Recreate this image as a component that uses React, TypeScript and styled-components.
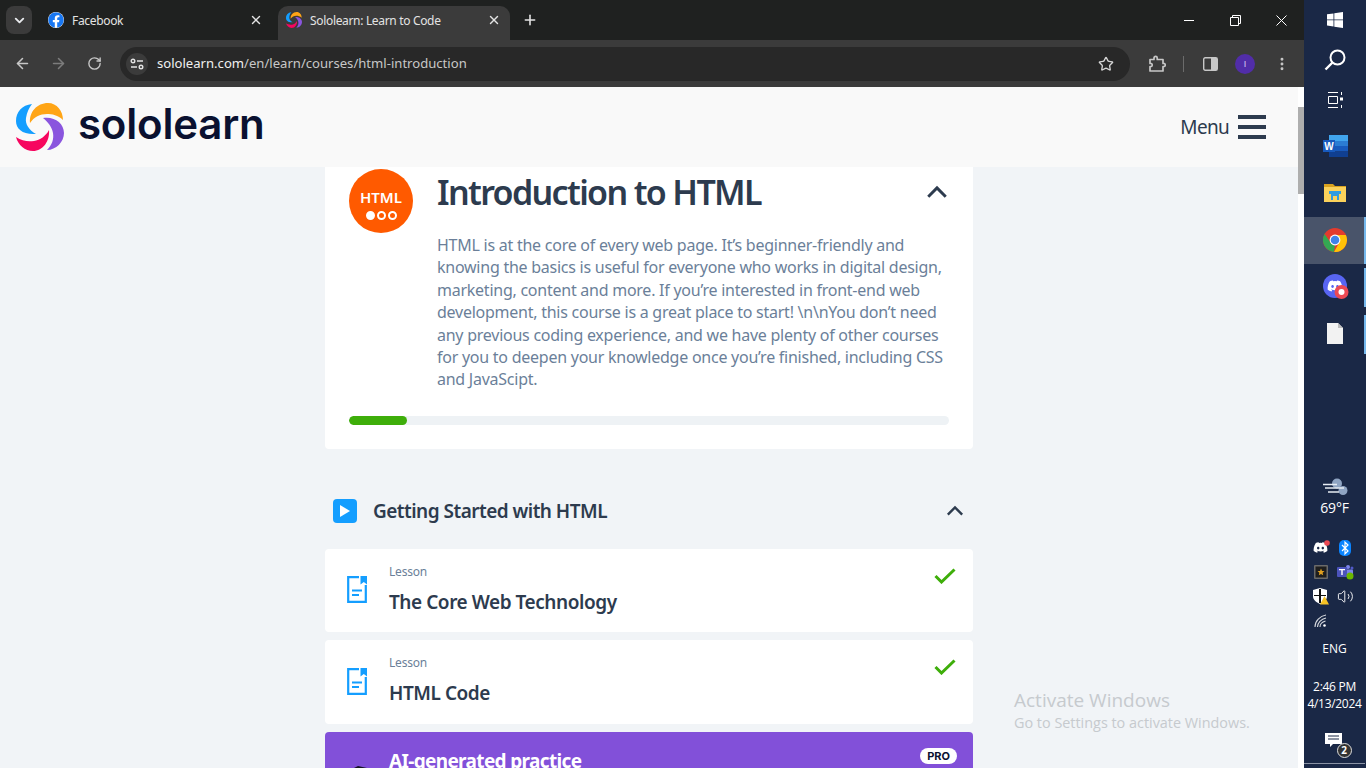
import styled, { createGlobalStyle } from "styled-components";
import { ArrowLeft, ArrowRight, ChevronDown, EllipsisVertical, Plus, RotateCw, Star, Volume2, X } from "lucide-react";
import { FaDiscord, FaFacebook } from "react-icons/fa";

const GlobalStyle = createGlobalStyle`
  html, body {
    margin: 0;
    height: 100%;
    overflow: hidden;
  }
  * {
    box-sizing: border-box;
  }
`;

const Screen = styled.div`
  display: flex;
  width: 1366px;
  height: 768px;
  overflow: hidden;
  position: relative;
  font-family: "Noto Sans", sans-serif;
`;

const Browser = styled.div`
  display: flex;
  flex-direction: column;
  width: 1304px;
  height: 768px;
`;

const TabStrip = styled.div`
  display: flex;
  align-items: flex-end;
  height: 40px;
  flex: none;
  background: #1f2120;
  padding-left: 6px;
`;

const TabSearch = styled.div`
  display: flex;
  align-items: center;
  justify-content: center;
  width: 26px;
  height: 28px;
  margin-bottom: 6px;
  border-radius: 8px;
  background: #3b3b3b;
  color: #e8eaed;
`;

const Tab = styled.div<{ $active?: boolean }>`
  display: flex;
  align-items: center;
  gap: 8px;
  width: ${(p) => (p.$active ? "232px" : "246px")};
  height: 34px;
  padding: 0 ${(p) => (p.$active ? "9px" : "15px")} 6px ${(p) => (p.$active ? "8px" : "16px")};
  border-radius: 10px 10px 0 0;
  background: ${(p) => (p.$active ? "#3b3b3b" : "transparent")};
  color: #e3e3e3;
  font-size: 12px;
  letter-spacing: -0.33px;
  span {
    flex: 1;
    white-space: nowrap;
  }
`;

const NewTab = styled.div`
  display: flex;
  align-items: center;
  padding: 0 0 12px 12px;
  color: #e3e3e3;
`;

const WindowControls = styled.div`
  display: flex;
  align-items: center;
  margin-left: auto;
  align-self: stretch;
  color: #fff;
`;

const WindowButton = styled.div`
  display: flex;
  align-items: center;
  justify-content: center;
  width: 46px;
  height: 40px;
`;

const Toolbar = styled.div`
  display: flex;
  align-items: center;
  height: 47px;
  flex: none;
  background: #3b3b3b;
  padding: 0 14px 0 13px;
  color: #c7c7c7;
`;

const NavButton = styled.div<{ $dim?: boolean }>`
  display: flex;
  align-items: center;
  justify-content: center;
  width: 18px;
  margin-right: 18px;
  color: ${(p) => (p.$dim ? "#7c7c7c" : "#c7c7c7")};
`;

const Omnibox = styled.div`
  display: flex;
  align-items: center;
  width: 1010px;
  height: 34px;
  margin-left: -1px;
  padding: 0 16px 0 6px;
  border-radius: 17px;
  background: #282828;
`;

const SiteChip = styled.div`
  display: flex;
  align-items: center;
  justify-content: center;
  width: 22px;
  height: 22px;
  margin-right: 9px;
  border-radius: 50%;
  background: #3b3b3b;
`;

const Url = styled.div`
  flex: 1;
  font-size: 13.1px;
  line-height: 16px;
  margin-top: -1px;
  color: #c7c7c7;
  white-space: nowrap;
  b {
    font-weight: 400;
    color: #f0f0f0;
  }
`;

const ToolDivider = styled.div`
  width: 1px;
  height: 16px;
  margin: 0 19px 0 17px;
  background: #6b6b6b;
`;

const Avatar = styled.div`
  display: flex;
  align-items: center;
  justify-content: center;
  width: 20px;
  height: 20px;
  margin-left: 17px;
  border-radius: 50%;
  background: #512da8;
  color: #d9cdf5;
  font-family: "Liberation Sans", sans-serif;
  font-size: 9px;
`;

const MoreButton = styled.div`
  display: flex;
  margin-left: 19px;
  color: #c7c7c7;
`;

const Viewport = styled.div`
  display: flex;
  flex: 1;
  min-height: 0;
`;

const Page = styled.div`
  flex: 1;
  min-width: 0;
  overflow: hidden;
  background: #f1f4f7;
`;

const Scrollbar = styled.div`
  width: 6px;
  flex: none;
  padding-top: 20px;
  background: #ffffff;
`;

const ScrollThumb = styled.div`
  height: 87px;
  background: #aeaeae;
`;

const SiteHeader = styled.header`
  display: flex;
  align-items: center;
  justify-content: space-between;
  height: 80px;
  padding: 0 32px 0 16px;
  background: #f9f9f9;
`;

const Brand = styled.div`
  display: flex;
  align-items: center;
  gap: 14px;
`;

const Wordmark = styled.div`
  margin-bottom: 7px;
  font-family: "Inter", sans-serif;
  font-size: 42px;
  font-weight: 600;
  letter-spacing: -0.2px;
  line-height: 48px;
  color: #0a1130;
`;

const MenuToggle = styled.div`
  display: flex;
  align-items: center;
  gap: 9px;
  font-size: 19px;
  letter-spacing: -0.7px;
  line-height: 26px;
  color: #2d3b4e;
`;

const Burger = styled.div`
  display: flex;
  flex-direction: column;
  gap: 6px;
  i {
    display: block;
    width: 28px;
    height: 4px;
    background: #2d3b4e;
  }
`;

const Main = styled.main`
  width: 648px;
  margin: 0 auto;
`;

const CourseCard = styled.section`
  display: grid;
  grid-template-columns: 64px 1fr;
  column-gap: 24px;
  padding: 2px 24px 24px;
  border-radius: 0 0 4px 4px;
  background: #ffffff;
`;

const CourseBadge = styled.div`
  display: flex;
  flex-direction: column;
  align-items: center;
  justify-content: center;
  width: 64px;
  height: 64px;
  padding-top: 6px;
  border-radius: 50%;
  background: #ff5a00;
  color: #ffffff;
  font-size: 15px;
  font-weight: 600;
  line-height: 18px;
`;

const BadgeDots = styled.div`
  display: flex;
  gap: 2px;
  margin-top: 5px;
`;

const BadgeDot = styled.i<{ $filled?: boolean }>`
  display: block;
  width: 9px;
  height: 9px;
  border-radius: 50%;
  border: 2px solid #ffffff;
  background: ${(p) => (p.$filled ? "#ffffff" : "transparent")};
`;

const CourseInfo = styled.div`
  min-width: 0;
`;

const TitleRow = styled.div`
  display: flex;
  align-items: center;
  justify-content: space-between;
  height: 48px;
  margin-bottom: 17px;
  padding: 0 1px 3px 0;
  color: #2d3b4e;
`;

const CourseTitle = styled.h1`
  margin: 0;
  font-size: 34px;
  font-weight: 600;
  letter-spacing: -1.65px;
  color: #2d3b4e;
`;

const Description = styled.p`
  margin: 0;
  font-size: 16px;
  line-height: 22.4px;
  letter-spacing: -0.25px;
  color: #6b7f99;
`;

const ProgressTrack = styled.div`
  grid-column: 1 / 3;
  height: 9px;
  margin-top: 25px;
  border-radius: 5px;
  background: #eef2f5;
  overflow: hidden;
`;

const ProgressFill = styled.div`
  height: 100%;
  border-radius: 5px;
  background: #3eae0a;
`;

const SectionHeader = styled.div`
  display: flex;
  align-items: center;
  gap: 16px;
  height: 24px;
  margin: 50px 0 26px;
  padding: 0 9px 0 8px;
  color: #2d3b4e;
`;

const SectionIcon = styled.div`
  display: flex;
  align-items: center;
  justify-content: center;
  width: 24px;
  height: 24px;
  border-radius: 4px;
  background: #149eff;
`;

const SectionTitle = styled.h2`
  flex: 1;
  margin: 0;
  font-size: 19px;
  font-weight: 600;
  letter-spacing: -0.52px;
  color: #2d3b4e;
`;

const Lessons = styled.div`
  display: flex;
  flex-direction: column;
  gap: 8px;
`;

const LessonRow = styled.div<{ $pro?: boolean }>`
  display: flex;
  align-items: ${(p) => (p.$pro ? "flex-start" : "center")};
  gap: 22px;
  padding: ${(p) => (p.$pro ? "15px" : "14px")} ${(p) => (p.$pro ? "16px" : "17px")} 16px 22px;
  border-radius: 4px;
  background: ${(p) => (p.$pro ? "#8250d9" : "#ffffff")};
`;

const LessonText = styled.div`
  flex: 1;
  min-width: 0;
`;

const LessonKind = styled.div`
  font-size: 12px;
  line-height: 18px;
  margin-bottom: 7px;
  letter-spacing: -0.2px;
  color: #6b7f99;
`;

const LessonTitle = styled.div<{ $pro?: boolean }>`
  font-size: 19px;
  font-weight: ${(p) => (p.$pro ? 700 : 600)};
  line-height: 28.5px;
  letter-spacing: ${(p) => (p.$pro ? "-0.65px" : "-0.45px")};
  color: ${(p) => (p.$pro ? "#ffffff" : "#2d3b4e")};
`;

const LessonStatus = styled.div`
  align-self: flex-start;
  display: flex;
  margin-top: 5px;
`;

const ProBadge = styled.div`
  align-self: flex-start;
  margin-top: 1px;
  padding: 0 7px;
  border-radius: 9px;
  background: #ffffff;
  color: #0a1130;
  font-family: "Inter", sans-serif;
  font-size: 11px;
  font-weight: 700;
  line-height: 16px;
`;

const ActivateNotice = styled.div`
  position: absolute;
  left: 1014px;
  top: 687px;
  color: #c6cace;
  font-family: "Open Sans", sans-serif;
  font-size: 14.4px;
  line-height: 20px;
  strong {
    display: block;
    font-size: 19px;
    font-weight: 400;
    line-height: 26px;
  }
`;

const Taskbar = styled.aside`
  display: flex;
  flex-direction: column;
  justify-content: space-between;
  width: 62px;
  height: 768px;
  flex: none;
  background: #1a2846;
  color: #ffffff;
`;

const TaskGroup = styled.div`
  display: flex;
  flex-direction: column;
`;

const SystemButton = styled.div`
  display: flex;
  align-items: center;
  justify-content: center;
  height: 40px;
`;

const AppList = styled.div`
  display: flex;
  flex-direction: column;
  margin-top: 3px;
`;

const AppSlot = styled.div<{ $active?: boolean; $running?: boolean }>`
  position: relative;
  display: flex;
  align-items: center;
  justify-content: center;
  height: 47px;
  padding-bottom: 2px;
  background: ${(p) => (p.$active ? "#49546a" : "transparent")};
  &::after {
    content: "";
    display: ${(p) => (p.$running ? "block" : "none")};
    position: absolute;
    right: 0;
    top: ${(p) => (p.$active ? "0" : "4px")};
    bottom: ${(p) => (p.$active ? "0" : "4px")};
    width: 2px;
    background: #76b9ed;
  }
`;

const Tray = styled.div`
  display: flex;
  flex-direction: column;
  align-items: center;
  padding-right: 1px;
  font-family: "Open Sans", sans-serif;
`;

const Weather = styled.div`
  display: flex;
  flex-direction: column;
  align-items: center;
  gap: 3px;
  font-size: 14px;
  letter-spacing: -0.2px;
  line-height: 18px;
  margin-bottom: 18px;
`;

const TrayGrid = styled.div`
  display: grid;
  grid-template-columns: 24px 24px;
  grid-auto-rows: 24.4px;
  justify-items: center;
  align-items: center;
  margin: 0 3px 7px 0;
`;

const Lang = styled.div`
  font-size: 12px;
  line-height: 18px;
  margin-bottom: 20px;
`;

const Clock = styled.div`
  font-size: 12px;
  letter-spacing: -0.3px;
  line-height: 17px;
  text-align: center;
  margin-bottom: 21px;
  white-space: nowrap;
`;

const Notify = styled.div`
  position: relative;
  display: flex;
  width: 20px;
  height: 20px;
  margin: 0 0 10px;
`;

const NotifyCount = styled.span`
  position: absolute;
  right: -7px;
  bottom: -5px;
  width: 15px;
  height: 15px;
  border-radius: 50%;
  border: 1px solid #ddd;
  background: #333;
  font-size: 10px;
  line-height: 13px;
  font-weight: 700;
  text-align: center;
`;

const TaskbarEdge = styled.div`
  height: 1px;
  width: 100%;
  margin-bottom: 4px;
  background: #8a93a5;
`;

function SoloLogo({ size }: { size: number }) {
  return (
    <svg width={size} height={size} viewBox="0 0 48 48">
      <path fill="#149eff" d="M16 1C6 2 0 9 0 18c0 8 7 14 20 13-7-4-11-10-10-16 1-6 3-10 6-14Z" />
      <path fill="#ffa516" d="M14 20C13 9 21 0 32 0c9 0 15 8 15 17-5-5-11-6-16-6-7 0-13 3-17 9Z" />
      <path fill="#8a55de" d="M27 15c11-2 21 5 21 15 0 9-8 17-17 17 5-5 7-11 6-17-1-6-5-11-10-15Z" />
      <path fill="#f6065f" d="M33 27c1 11-6 21-16 21-8 0-15-6-17-14 6 4 12 5 18 4 6-1 12-5 15-11Z" />
    </svg>
  );
}

function LessonIcon() {
  return (
    <svg width="20" height="27" viewBox="0 0 20 27" fill="none">
      <path d="M12 1.2H1.2v24.6h17.6V9" stroke="#149eff" strokeWidth="2.2" />
      <path d="M13.5 0H20v8.5l-3.2-2.4-3.3 2.4Z" fill="#149eff" />
      <path d="M5 14.5h10M5 19h7" stroke="#149eff" strokeWidth="2.2" />
    </svg>
  );
}

function CheckIcon() {
  return (
    <svg width="22" height="16" viewBox="0 0 22 16" fill="none">
      <path d="M1.5 8 7.5 14 20.5 1.5" stroke="#3eae0a" strokeWidth="3" />
    </svg>
  );
}

function ChevronUp({ width, weight }: { width: number; weight: number }) {
  return (
    <svg width={width} height={width * 0.62} viewBox="0 0 22 14" fill="none">
      <path d="M2 12 11 3l9 9" stroke="currentColor" strokeWidth={weight} />
    </svg>
  );
}

function ChromeIcon() {
  return (
    <svg width="24" height="24" viewBox="0 0 24 24">
      <circle cx="12" cy="12" r="12" fill="#e33b2e" />
      <path fill="#ffc107" d="M12 7h10.9A12 12 0 0 1 11 24l5.3-9.5A5 5 0 0 0 12 7Z" />
      <path fill="#34a853" d="M1.6 6 7.5 14.5A5 5 0 0 0 12 17l-1 7A12 12 0 0 1 1.6 6Z" />
      <circle cx="12" cy="12" r="5.4" fill="#fff" />
      <circle cx="12" cy="12" r="4.3" fill="#3f83ea" />
    </svg>
  );
}

function WordIcon() {
  return (
    <svg width="25" height="22" viewBox="0 0 25 22">
      <rect x="6" y="0" width="19" height="6" fill="#41a5ee" />
      <rect x="6" y="6" width="19" height="5" fill="#2b7cd3" />
      <rect x="6" y="11" width="19" height="5.5" fill="#185abd" />
      <rect x="6" y="16.5" width="19" height="5.5" fill="#103f91" />
      <rect x="0" y="5" width="12" height="12" fill="#185abd" />
      <text x="6" y="14.5" textAnchor="middle" fontSize="10" fontWeight="700" fill="#fff" fontFamily="Liberation Sans">W</text>
    </svg>
  );
}

function FolderIcon() {
  return (
    <svg width="22" height="18" viewBox="0 0 22 18">
      <path fill="#d9a21f" d="M0 0h9l2 2h11v3H0Z" />
      <rect y="3" width="22" height="15" fill="#fbd25b" />
      <path fill="#2f9ce0" d="M5 7h12v3h-2v6H7v-6H5Z" />
      <rect x="9" y="12" width="4" height="6" fill="#fbd25b" />
    </svg>
  );
}

function DiscordApp() {
  return (
    <svg width="26" height="26" viewBox="0 0 26 26" style={{ marginLeft: 2 }}>
      <circle cx="12" cy="12" r="12" fill="#5865f2" />
      <FaDiscord x={4} y={4} size={16} color="#fff" />
      <circle cx="18.5" cy="18" r="7" fill="#ed4a54" />
      <circle cx="18.5" cy="18" r="3" fill="#fff" />
    </svg>
  );
}

export default function App() {
  return (
    <Screen>
      <GlobalStyle />
      <Browser>
        <TabStrip>
          <TabSearch>
            <ChevronDown size={15} strokeWidth={3} />
          </TabSearch>
          <Tab>
            <FaFacebook size={16} color="#1877f2" style={{ background: "#fff", borderRadius: "50%" }} />
            <span>Facebook</span>
            <X size={14} strokeWidth={2.4} />
          </Tab>
          <Tab $active>
            <SoloLogo size={16} />
            <span>Sololearn: Learn to Code</span>
            <X size={14} strokeWidth={2.4} />
          </Tab>
          <NewTab>
            <Plus size={16} strokeWidth={2.4} />
          </NewTab>
          <WindowControls>
            <WindowButton>
              <svg width="11" height="11" viewBox="0 0 11 11">
                <path d="M0 5.5h10" stroke="#fff" />
              </svg>
            </WindowButton>
            <WindowButton>
              <svg width="11" height="11" viewBox="0 0 11 11" fill="none" stroke="#fff">
                <path d="M.5 2.5h8v8h-8ZM2.5 2.5v-2h8v8h-2" />
              </svg>
            </WindowButton>
            <WindowButton>
              <svg width="11" height="11" viewBox="0 0 11 11">
                <path d="M.5.5l10 10M10.5.5l-10 10" stroke="#fff" />
              </svg>
            </WindowButton>
          </WindowControls>
        </TabStrip>
        <Toolbar>
          <NavButton>
            <ArrowLeft size={17} strokeWidth={2.2} />
          </NavButton>
          <NavButton $dim>
            <ArrowRight size={17} strokeWidth={2.2} />
          </NavButton>
          <NavButton>
            <RotateCw size={15} strokeWidth={2.2} />
          </NavButton>
          <Omnibox>
            <SiteChip>
              <svg width="14" height="12" viewBox="0 0 14 12" fill="none" stroke="#e3e3e3" strokeWidth="1.4">
                <circle cx="3" cy="3" r="1.8" />
                <path d="M7 3h6M1 9h6" />
                <circle cx="11" cy="9" r="1.8" />
              </svg>
            </SiteChip>
            <Url>
              <b>sololearn.com</b>/en/learn/courses/html-introduction
            </Url>
            <Star size={16} strokeWidth={2} color="#d5d5d5" />
          </Omnibox>
          <svg width="18" height="18" viewBox="0 0 18 18" fill="none" stroke="#c7c7c7" strokeWidth="1.7" style={{ marginLeft: 18 }}>
            <path d="M2 4.5h4V3a1.6 1.6 0 0 1 3.2 0v1.5H15v4h1.2a1.6 1.6 0 0 1 0 3H15V16H2v-4.5h1.2a1.6 1.6 0 0 0 0-3H2Z" strokeLinejoin="round" />
          </svg>
          <ToolDivider />
          <svg width="15" height="14" viewBox="0 0 15 14">
            <rect x=".7" y=".7" width="13.6" height="12.6" rx="1.5" fill="none" stroke="#c7c7c7" strokeWidth="1.4" />
            <rect x="8" y="1" width="6" height="12" fill="#c7c7c7" />
          </svg>
          <Avatar>I</Avatar>
          <MoreButton>
            <EllipsisVertical size={16} strokeWidth={2.4} />
          </MoreButton>
        </Toolbar>
        <Viewport>
          <Page>
            <SiteHeader>
              <Brand>
                <SoloLogo size={48} />
                <Wordmark>sololearn</Wordmark>
              </Brand>
              <MenuToggle>
                <span>Menu</span>
                <Burger>
                  <i />
                  <i />
                  <i />
                </Burger>
              </MenuToggle>
            </SiteHeader>
            <Main>
              <CourseCard>
                <CourseBadge>
                  HTML
                  <BadgeDots>
                    <BadgeDot $filled />
                    <BadgeDot />
                    <BadgeDot />
                  </BadgeDots>
                </CourseBadge>
                <CourseInfo>
                  <TitleRow>
                    <CourseTitle>Introduction to HTML</CourseTitle>
                    <ChevronUp width={22} weight={3} />
                  </TitleRow>
                  <Description>
                    HTML is at the core of every web page. It’s beginner-friendly and knowing the basics is useful for
                    everyone who works in digital design, marketing, content and more. If you’re interested in front-end
                    web development, this course is a great place to start! \n\nYou don’t need any previous coding
                    experience, and we have plenty of other courses for you to deepen your knowledge once you’re
                    finished, including CSS and JavaScipt.
                  </Description>
                </CourseInfo>
                <ProgressTrack>
                  <ProgressFill style={{ width: "9.7%" }} />
                </ProgressTrack>
              </CourseCard>
              <SectionHeader>
                <SectionIcon>
                  <svg width="10" height="12" viewBox="0 0 10 12">
                    <path d="M0 0l10 6-10 6Z" fill="#fff" />
                  </svg>
                </SectionIcon>
                <SectionTitle>Getting Started with HTML</SectionTitle>
                <ChevronUp width={18} weight={3} />
              </SectionHeader>
              <Lessons>
                <LessonRow>
                  <LessonIcon />
                  <LessonText>
                    <LessonKind>Lesson</LessonKind>
                    <LessonTitle>The Core Web Technology</LessonTitle>
                  </LessonText>
                  <LessonStatus>
                    <CheckIcon />
                  </LessonStatus>
                </LessonRow>
                <LessonRow>
                  <LessonIcon />
                  <LessonText>
                    <LessonKind>Lesson</LessonKind>
                    <LessonTitle>HTML Code</LessonTitle>
                  </LessonText>
                  <LessonStatus>
                    <CheckIcon />
                  </LessonStatus>
                </LessonRow>
                <LessonRow $pro>
                  <svg width="20" height="40" viewBox="0 0 20 40" style={{ marginTop: 19 }}>
                    <path d="M3 4l8-4 9 2v38H3Z" fill="#141225" />
                  </svg>
                  <LessonText>
                    <LessonTitle $pro>AI-generated practice</LessonTitle>
                  </LessonText>
                  <ProBadge>PRO</ProBadge>
                </LessonRow>
              </Lessons>
            </Main>
          </Page>
          <Scrollbar>
            <ScrollThumb />
          </Scrollbar>
        </Viewport>
      </Browser>
      <Taskbar>
        <TaskGroup>
          <SystemButton>
            <svg width="16" height="16" viewBox="0 0 16 16" fill="#fff">
              <path d="M0 2.3 6.5 1.4V7.5H0ZM7.3 1.3 16 0v7.5H7.3ZM0 8.3h6.5v6.2L0 13.6ZM7.3 8.3H16V16l-8.7-1.2Z" />
            </svg>
          </SystemButton>
          <SystemButton>
            <svg width="22" height="22" viewBox="0 0 22 22" fill="none" stroke="#fff" strokeWidth="2">
              <circle cx="13.5" cy="8.5" r="7" />
              <path d="M8.5 13.5 1.5 20.5" strokeWidth="2.4" />
            </svg>
          </SystemButton>
          <SystemButton>
            <svg width="17" height="16" viewBox="0 0 17 16" fill="none" stroke="#fff">
              <path d="M1 .5h10M1 15.5h10M1.5 4.5h9v7h-9ZM14.5 0v3M14.5 13v3" />
              <rect x="13" y="5.5" width="3" height="3" fill="#fff" stroke="none" />
            </svg>
          </SystemButton>
          <AppList>
            <AppSlot>
              <WordIcon />
            </AppSlot>
            <AppSlot>
              <FolderIcon />
            </AppSlot>
            <AppSlot $active $running>
              <ChromeIcon />
            </AppSlot>
            <AppSlot $running>
              <DiscordApp />
            </AppSlot>
            <AppSlot $running>
              <svg width="16" height="21" viewBox="0 0 16 21">
                <path d="M0 0h11l5 5v16H0Z" fill="#f2f2f2" />
                <path d="M11 0v5h5Z" fill="#bdbdbd" />
              </svg>
            </AppSlot>
          </AppList>
        </TaskGroup>
        <Tray>
          <Weather>
            <svg width="26" height="18" viewBox="0 0 26 18" fill="none">
              <circle cx="15" cy="5.500" r="5" fill="#8fa4c2" />
              <circle cx="21" cy="12.500" r="4.500" fill="#8fa4c2" />
              <path d="M1 6.500h14M3 10h19M6 14h11" stroke="#e6ebf2" strokeWidth="1.5" />
            </svg>
            69°F
          </Weather>
          <TrayGrid>
            <svg width="17" height="15" viewBox="0 0 17 15">
              <FaDiscord x={0} y={0} size={15} color="#fff" />
              <circle cx="14" cy="3" r="2.800" fill="#ed4a54" />
            </svg>
            <svg width="12" height="16" viewBox="0 0 12 16">
              <rect width="12" height="16" rx="5" fill="#0a84ff" />
              <path d="M3 5l6 6-3 2.800V2.200l3 2.800-6 6" fill="none" stroke="#fff" strokeWidth="1.200" />
            </svg>
            <svg width="14" height="14" viewBox="0 0 14 14">
              <rect width="14" height="14" rx="1" fill="#6a6a6a" />
              <rect x="1.500" y="1.500" width="11" height="11" fill="#1e1e1e" />
              <path d="M7 3.500l1 2.400 2.500.2-1.900 1.600.6 2.500L7 8.900l-2.200 1.300.6-2.500-1.900-1.600 2.500-.2Z" fill="#e0a020" />
            </svg>
            <svg width="17" height="16" viewBox="0 0 17 16">
              <circle cx="11" cy="3" r="2" fill="#7b83eb" />
              <circle cx="15" cy="4" r="1.500" fill="#5059c9" />
              <rect x="8" y="5.500" width="8" height="7" rx="1" fill="#7b83eb" />
              <rect x="0" y="3" width="10" height="10" rx="1" fill="#4b53bc" />
              <path d="M2 5h6v1.300H5.700V11H4.300V6.300H2Z" fill="#fff" />
              <circle cx="13" cy="12" r="3.500" fill="#6bb700" />
            </svg>
            <svg width="16" height="17" viewBox="0 0 16 17">
              <path d="M7 0l7 2v6c0 4-3 6-7 8-4-2-7-4-7-8V2Z" fill="#fff" />
              <path d="M6 1v6H1V8h5v7h2V8h5V7H8V1Z" fill="#111" />
              <path d="M11.500 8l4.500 8.500H7Z" fill="#f7c325" />
            </svg>
            <Volume2 size={17} strokeWidth={1.3} />
            <svg width="14" height="14" viewBox="0 0 14 14" fill="none" stroke="#d6d9de" strokeWidth="1.100">
              <path d="M1 13C1 7 6 2 12 1M3.500 13c0-4 3.500-8 8.500-9M6 13c0-3 2-5 5.500-6" />
              <circle cx="10.500" cy="11.500" r="1.300" fill="#fff" stroke="none" />
            </svg>
          </TrayGrid>
          <Lang>ENG</Lang>
          <Clock>
            2:46 PM
            <br />
            4/13/2024
          </Clock>
          <Notify>
            <svg width="17" height="15" viewBox="0 0 17 15">
              <path d="M0 0h17v11H8l-3 3v-3H0Z" fill="#fff" />
              <path d="M3 3h11M3 6h11" stroke="#1a2846" />
            </svg>
            <NotifyCount>2</NotifyCount>
          </Notify>
          <TaskbarEdge />
        </Tray>
      </Taskbar>
      <ActivateNotice>
        <strong>Activate Windows</strong>
        Go to Settings to activate Windows.
      </ActivateNotice>
    </Screen>
  );
}
